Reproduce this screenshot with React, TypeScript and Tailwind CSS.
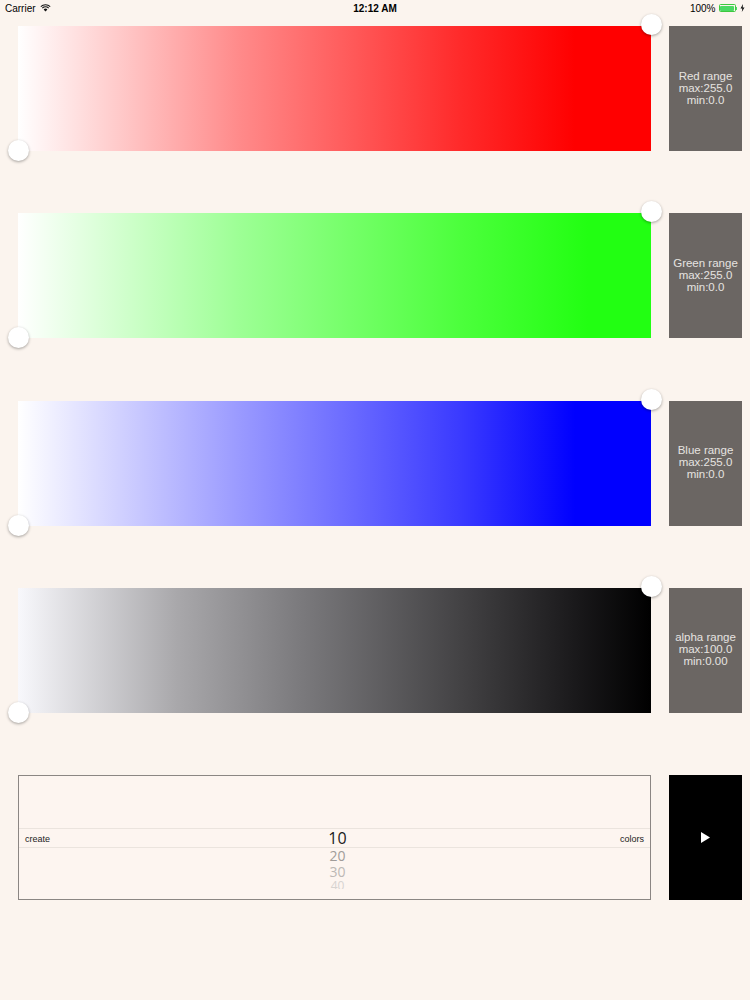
import React from "react";

const bars = [
  { name: "Red range", max: "255.0", min: "0.0", bg: "bg-[linear-gradient(to_right,#ffffff_0%,#ff8a8a_35%,#ff2a2a_70%,#ff0000_88%,#ff0000_100%)]" },
  { name: "Green range", max: "255.0", min: "0.0", bg: "bg-[linear-gradient(to_right,#ffffff_0%,#9dff95_35%,#4cff3c_70%,#22ff12_90%,#22ff12_100%)]" },
  { name: "Blue range", max: "255.0", min: "0.0", bg: "bg-[linear-gradient(to_right,#ffffff_0%,#9a9aff_35%,#3a3aff_70%,#0000ff_88%,#0000ff_100%)]" },
  { name: "alpha range", max: "100.0", min: "0.00", bg: "bg-[linear-gradient(to_right,#f8f8fc_0%,#a9a8ab_25%,#7a797c_45%,#434244_70%,#1a191b_88%,#000000_100%)]" },
];

function Knob({ className }: { className: string }) {
  return (
    <div
      className={`absolute h-[21px] w-[21px] rounded-full bg-white shadow-[0_1px_3px_rgba(0,0,0,0.35)] ${className}`}
    />
  );
}

function StatusBar() {
  return (
    <div className="relative flex h-4 items-center px-[5px] text-[10px] text-black">
      <div className="flex items-center gap-1">
        <span>Carrier</span>
        <svg width="11" height="8" viewBox="0 0 11 8">
          <path d="M5.5 7.6 L3.6 5.5 A2.8 2.8 0 0 1 7.4 5.5 Z" fill="#111" />
          <path d="M2.3 4.2 A4.6 4.6 0 0 1 8.7 4.2" stroke="#111" strokeWidth="1.1" fill="none" />
          <path d="M0.8 2.6 A6.8 6.8 0 0 1 10.2 2.6" stroke="#111" strokeWidth="1.1" fill="none" />
        </svg>
      </div>
      <div className="absolute left-1/2 -translate-x-1/2 font-semibold">12:12 AM</div>
      <div className="ml-auto flex items-center gap-[3px]">
        <span>100%</span>
        <div className="flex items-center">
          <div className="h-[8px] w-[17px] rounded-[1.5px] border border-[#3ec83e] p-[0.5px]">
            <div className="h-full w-full rounded-[1px] bg-[#4cd964]" />
          </div>
          <div className="h-[3px] w-[1.5px] bg-[#4cd964]" />
        </div>
        <svg width="5" height="8" viewBox="0 0 5 8">
          <path d="M3 0 L0.5 4.5 H2.3 L1.8 8 L4.5 3.4 H2.7 Z" fill="#111" />
        </svg>
      </div>
    </div>
  );
}

export default function App() {
  return (
    <div className="min-h-[1000px] w-[750px] bg-[#fbf4ee] font-['Liberation_Sans',Arial,sans-serif]">
      <StatusBar />
      <div className="flex flex-col gap-[62.3px] pl-[18px] pt-[10px]">
        {bars.map((b) => (
          <div key={b.name} className="flex h-[125px] gap-[18px]">
            <div className={`relative w-[633px] ${b.bg}`}>
              <Knob className="right-[-11px] top-[-12px]" />
              <Knob className="bottom-[-10px] left-[-10px]" />
            </div>
            <div className="flex w-[73px] flex-col items-center justify-center bg-[#6b6663] pb-[2px] text-center text-[11.5px] leading-[12px] text-[#e6e3e0]">
              <span>{b.name}</span>
              <span>max:{b.max}</span>
              <span>min:{b.min}</span>
            </div>
          </div>
        ))}
        <div className="flex h-[125px] gap-[18px]">
          <div className="relative w-[633px] border border-[#8b8683] bg-[#fdf5f0]">
            <div className="absolute left-0 right-0 top-[52px] h-[20px] border-y border-[#ebe4de]" />
            <div className="absolute left-[6px] top-[57px] text-[9px] text-[#222]">create</div>
            <div className="absolute right-[6px] top-[57px] text-[9px] text-[#222]">colors</div>
            <div className="absolute left-[50%] top-[53px] flex h-[60px] -translate-x-1/2 flex-col items-center overflow-hidden pl-[6px] font-['Open_Sans',Arial,sans-serif]">
              <span className="text-[16px] leading-[19px] text-[#1a1a1a]">10</span>
              <span className="text-[14px] leading-[16px] text-[#a09c99]">20</span>
              <span className="text-[14px] leading-[15px] text-[#bcb8b5]">30</span>
              <span className="text-[12px] leading-[13px] text-[#d7d3d0]">40</span>
            </div>
          </div>
          <div className="flex w-[73px] items-center justify-center bg-black">
            <svg width="9" height="11" viewBox="0 0 9 11">
              <path d="M0 0 L9 5.5 L0 11 Z" fill="#fff" />
            </svg>
          </div>
        </div>
      </div>
    </div>
  );
}
